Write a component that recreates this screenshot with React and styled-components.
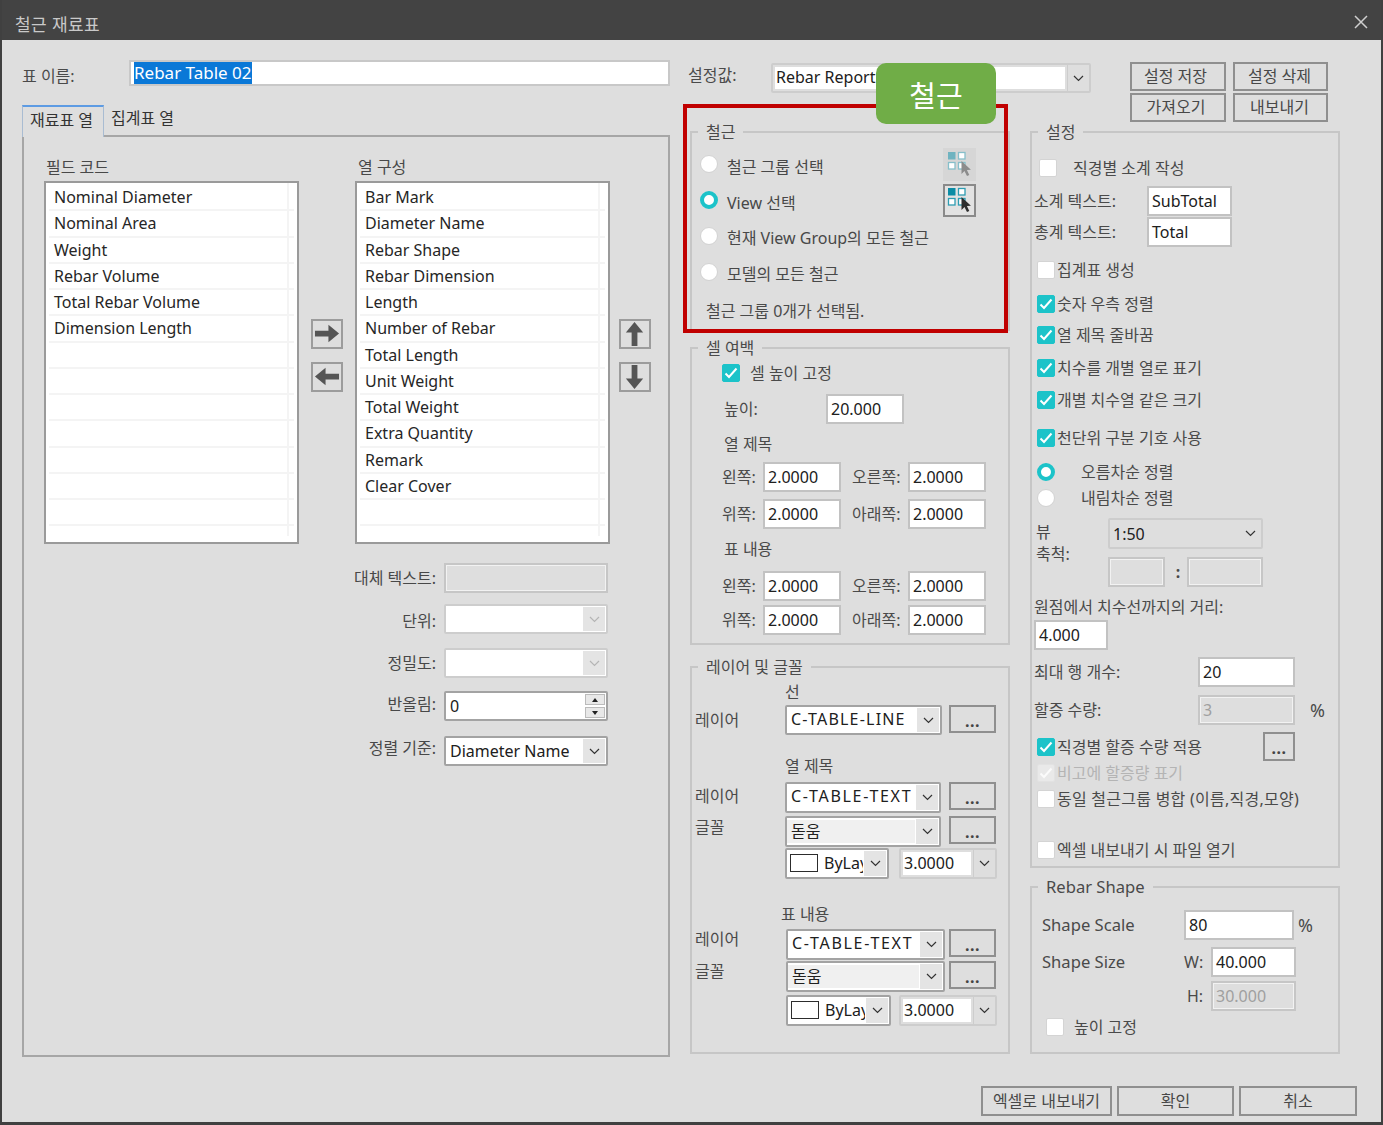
import React from "react";
import styled, { createGlobalStyle } from "styled-components";

const GlobalStyle = createGlobalStyle`
  * { box-sizing: border-box; }
  html, body { margin: 0; padding: 0; background: #dedede; }
  body {
    font-family: "Noto Sans", "Noto Sans CJK KR", sans-serif;
    font-size: 16px;
    color: #484848;
  }
`;

const Window = styled.div`
  position: relative;
  width: 1383px;
  height: 1125px;
  overflow: hidden;
  background: #dedede;
  border-left: 2px solid #404040;
  border-right: 2px solid #404040;
  border-bottom: 3px solid #404040;
`;

const TitleBar = styled.div`
  height: 40px;
  margin: 0 -2px;
  padding: 4px 15px 0 15px;
  display: flex;
  align-items: center;
  justify-content: space-between;
  background: #434343;
  color: #c9c9c9;
`;

const TitleText = styled.span`
  padding-top: 2px;
  font-size: 17px;
  letter-spacing: 0.4px;
`;

const Main = styled.div`
  display: flex;
  gap: 20px;
  padding: 20px 0 0 20px;
`;

const LeftColumn = styled.div`
  width: 648px;
`;

const RightArea = styled.div`
  margin-top: 3px;
`;

const HeaderRow = styled.div`
  height: 59px;
  margin-left: -2px;
  display: flex;
  align-items: flex-start;
`;

const HeaderButtons = styled.div`
  margin: -1px 0 0 39px;
`;

const Columns = styled.div`
  display: flex;
  gap: 20px;
`;

const Stack = styled.div`
  width: ${(p) => p.$w}px;
`;

const Row = styled.div`
  display: flex;
  align-items: ${(p) => p.$align || "center"};
  height: ${(p) => (p.$h ? `${p.$h}px` : "auto")};
  margin-top: ${(p) => p.$mt || 0}px;
  padding-left: ${(p) => p.$pl || 0}px;
  padding-right: ${(p) => p.$pr || 0}px;
  gap: ${(p) => p.$gap || 0}px;
  min-height: 20px;
`;

const Label = styled.div`
  flex: none;
  width: ${(p) => (p.$w ? `${p.$w}px` : "auto")};
  margin-left: ${(p) => p.$ml || 0}px;
  padding-top: ${(p) => p.$pt || 0}px;
  line-height: 20px;
  white-space: nowrap;
  font-size: ${(p) => p.$size || 16}px;
  letter-spacing: ${(p) => p.$ls || 0}px;
  color: ${(p) => (p.$muted ? "#b4b4b4" : "#4a4a4a")};
`;

const Box = styled.div`
  flex: none;
  width: ${(p) => p.$w}px;
  height: ${(p) => p.$h || 30}px;
  padding: 0 3px;
  display: flex;
  align-items: center;
  overflow: hidden;
  white-space: nowrap;
  background: ${(p) => (p.$off ? "#dedede" : "#fff")};
  border: 2px solid ${(p) => (p.$off ? "#c6c6c6" : "#c2c2c2")};
  box-shadow: ${(p) => (p.$off ? "inset 0 0 0 1px #f2f2f2" : "none")};
  color: ${(p) => (p.$off ? "#a0a0a0" : "#202020")};
`;

const Selected = styled.span`
  background: #0a78d7;
  color: #fff;
  font-size: 17px;
  line-height: 22px;
`;

const Combo = styled.div`
  flex: none;
  display: flex;
  align-items: stretch;
  width: ${(p) => p.$w}px;
  height: ${(p) => p.$h || 30}px;
  background: ${(p) => (p.$flat || p.$boxed ? "#dedede" : "#fff")};
  border: 2px solid ${(p) => (p.$strong ? "#a3a3a3" : "#cdcdcd")};
  border-radius: 2px;
  color: #202020;
`;

const ComboText = styled.div`
  flex: 1;
  min-width: 0;
  display: flex;
  align-items: center;
  gap: 6px;
  padding-left: ${(p) => p.$pl || 4}px;
  padding-bottom: ${(p) => p.$lift || 0}px;
  overflow: hidden;
  white-space: nowrap;
  letter-spacing: ${(p) => p.$ls || 0}px;
  background: ${(p) => (p.$tint ? "#f0f0f0" : p.$boxed ? "#fff" : "transparent")};
  margin: ${(p) => (p.$tint ? "2px 0" : p.$boxed ? "2px" : 0)};
`;

const ComboArrow = styled.div`
  flex: none;
  width: 22px;
  display: flex;
  align-items: center;
  justify-content: center;
  background: ${(p) => (p.$plain ? "transparent" : "#e4e4e4")};
  margin: ${(p) => (p.$plain ? 0 : "1px")};
  border-left: ${(p) => (p.$split ? "1px solid #cdcdcd" : 0)};
`;

const Swatch = styled.span`
  flex: none;
  width: 28px;
  height: 18px;
  background: #fff;
  border: 1.5px solid #2c2c2c;
`;

const SpinColumn = styled.div`
  flex: none;
  width: 20px;
  margin: 1px;
  display: flex;
  flex-direction: column;
  justify-content: center;
  gap: 2px;
`;

const SpinCell = styled.div`
  height: 12px;
  display: flex;
  align-items: center;
  justify-content: center;
  background: #e8e8e8;
  border: 1px solid #bbb;
`;

const Caret = styled.span`
  width: 0;
  height: 0;
  border-left: 3.5px solid transparent;
  border-right: 3.5px solid transparent;
  ${(p) => (p.$down ? "border-top: 4px solid #222;" : "border-bottom: 4px solid #222;")}
`;

const Button = styled.div`
  flex: none;
  width: ${(p) => p.$w}px;
  height: ${(p) => p.$h || 28}px;
  padding: 0 ${(p) => p.$pr || 0}px 3px 0;
  display: flex;
  align-items: center;
  justify-content: center;
  background: #dedede;
  border: 2px solid #8f8f8f;
  color: #484848;
  white-space: nowrap;
`;

const Dots = styled.span`
  font-weight: 700;
  color: #444;
  padding-top: 6px;
  letter-spacing: 0.5px;
`;

const NameInput = styled(Box)`
  height: 26px;
  border-color: #c8c8c8;
`;

const Tabs = styled.div`
  display: flex;
  margin-top: 19px;
  height: 30px;
`;

const Tab = styled.div`
  width: ${(p) => p.$w}px;
  height: ${(p) => (p.$active ? 32 : 30)}px;
  padding-left: 7px;
  line-height: 26px;
  position: relative;
  z-index: 1;
  color: #333;
  background: #dedede;
  ${(p) =>
    p.$active &&
    `border: 1.5px solid #a9bcd2; border-top: 2px solid #5d9be3; border-bottom: 0;`}
`;

const TabPanel = styled.div`
  height: 922px;
  padding: 20px 0 0 20px;
  border: 2px solid #a6a6a6;
`;

const ListRow = styled.div`
  display: grid;
  grid-template-columns: 255px 56px 255px 41px;
`;

const ListTitle = styled.div`
  line-height: 20px;
  height: 24px;
  padding-left: ${(p) => p.$pl}px;
`;

const List = styled.div`
  position: relative;
  height: 363px;
  padding: 2px 3px;
  overflow: hidden;
  background: #fff;
  border: 2px solid #9a9a9a;
  &::after {
    content: "";
    position: absolute;
    top: 0;
    bottom: 6px;
    right: 8px;
    width: 2px;
    background: #f4f4f4;
  }
`;

const ListItem = styled.div`
  height: 26.25px;
  line-height: 25px;
  padding-left: 5px;
  color: #262626;
  white-space: nowrap;
  border-bottom: 2px solid #f4f4f4;
`;

const MoveColumn = styled.div`
  display: flex;
  flex-direction: column;
  gap: 13px;
  padding: 162px 0 0 ${(p) => p.$pl}px;
`;

const MoveButton = styled(Button)`
  width: 32px;
  height: 30px;
  padding: 0;
  border-color: #9c9c9c;
`;

const FormRow = styled.div`
  display: flex;
  align-items: center;
  width: 564px;
  gap: 8px;
  margin-top: ${(p) => p.$mt}px;
`;

const FormLabel = styled.div`
  flex: 1;
  padding-top: ${(p) => p.$pt || 0}px;
  padding-bottom: ${(p) => p.$pb || 0}px;
  text-align: right;
  line-height: 20px;
  white-space: nowrap;
`;

const Group = styled.fieldset`
  margin: ${(p) => p.$mt || 0}px 0 0;
  padding: 0;
  min-width: 0;
  width: 100%;
  height: ${(p) => p.$h}px;
  border: 2px solid #c6c6c6;
`;

const GroupTitle = styled.legend`
  margin-left: 6px;
  padding: 0 8px;
  line-height: 20px;
  font-size: ${(p) => p.$size || 16}px;
  color: #4a4a4a;
`;

const Radio = styled.span`
  flex: none;
  width: 18px;
  height: 18px;
  border-radius: 50%;
  background: #fff;
  border: ${(p) => (p.$on ? "4.5px solid #1cc3c9" : "1px solid #d2d2d2")};
`;

const Check = styled.span`
  flex: none;
  width: 18px;
  height: 18px;
  display: flex;
  align-items: center;
  justify-content: center;
  border-radius: 2px;
  background: ${(p) => (p.$off ? "#e9e9e9" : p.$on ? "#1cc3c9" : "#fff")};
  border: 1px solid ${(p) => (p.$off ? "#e2e2e2" : p.$on ? "#1cc3c9" : "#d4d4d4")};
`;

const RadioText = styled.span`
  padding-top: ${(p) => p.$pt || 6}px;
  line-height: 20px;
  white-space: nowrap;
`;

const IconButton = styled.div`
  flex: none;
  margin-left: auto;
  width: 33px;
  height: 33px;
  display: flex;
  align-items: center;
  justify-content: center;
  background: ${(p) => (p.$off ? "#d6d6d6" : "#e2e2e2")};
  border: 2px solid ${(p) => (p.$off ? "#d6d6d6" : "#8a8a8a")};
`;

const ScaleLabels = styled.div`
  flex: none;
  width: 72px;
  padding-top: 3px;
  line-height: 22px;
`;

const Colon = styled.div`
  width: 22px;
  padding-left: 4px;
  text-align: center;
  font-weight: 700;
`;

const Pushed = styled.div`
  margin-left: ${(p) => (p.$auto ? "auto" : `${p.$ml}px`)};
`;

const Footer = styled.div`
  display: flex;
  justify-content: flex-end;
  gap: 5px;
  margin-top: 29px;
  padding-right: 24px;
`;

const RedFrame = styled.div`
  position: absolute;
  left: 681px;
  top: 104px;
  width: 325px;
  height: 229px;
  border: 4px solid #c00000;
  pointer-events: none;
`;

const Badge = styled.div`
  position: absolute;
  left: 874px;
  top: 63px;
  width: 120px;
  height: 61px;
  display: flex;
  align-items: center;
  justify-content: center;
  border-radius: 10px;
  background: #70ad47;
  color: #fff;
  font-size: 29px;
`;

const Chevron = ({ light }) => (
  <svg width="11" height="7" viewBox="0 0 11 7" fill="none">
    <path d="M1 1l4.5 4.5L10 1" stroke={light ? "#b5b5b5" : "#333"} strokeWidth="1.2" />
  </svg>
);

const Tick = ({ light }) => (
  <svg width="14" height="12" viewBox="0 0 14 12" fill="none">
    <path d="M1.5 6.5l3.5 3.5 7.5-8.5" stroke={light ? "#fbfbfb" : "#fff"} strokeWidth="2" />
  </svg>
);

const CloseIcon = () => (
  <svg width="14" height="14" viewBox="0 0 14 14" fill="none">
    <path d="M1 1l12 12M13 1L1 13" stroke="#cfcfcf" strokeWidth="1.5" />
  </svg>
);

const arrows = {
  right: "M1 8h14V2l11 9-11 9v-6H1z",
  left: "M26 8H12V2L1 11l11 9v-6h14z",
  up: "M8 26V12H2l9-11 9 11h-6v14z",
  down: "M8 1v14H2l9 11 9-11h-6V1z",
};

const MoveArrow = ({ dir }) => (
  <svg width="26" height="26" viewBox="0 0 27 27">
    <path d={arrows[dir]} fill="#555" transform={dir === "up" || dir === "down" ? "translate(2 0)" : "translate(0 2)"} />
  </svg>
);

const PickIcon = ({ off }) => {
  const fill = off ? "#6fb3c0" : "#0b8ca5";
  const line = off ? "#86bfca" : "#2e9db2";
  const cursor = off ? "#8c8c8c" : "#2e2e2e";
  return (
    <svg width="28" height="28" viewBox="0 0 28 28">
      <rect x="2" y="2" width="7.5" height="7.5" fill={fill} />
      <rect x="12.5" y="2.5" width="6.5" height="6.5" fill="#fff" stroke={line} strokeWidth="1.3" />
      <rect x="2.5" y="12.5" width="6.5" height="6.5" fill="#fff" stroke={line} strokeWidth="1.3" />
      <rect x="12.5" y="12.5" width="6.5" height="6.5" fill="#fff" stroke={line} strokeWidth="1.3" />
      <path d="M15.5 11v13l3-3 2.5 5 2.3-1-2.4-5 4-.3z" fill={cursor} />
    </svg>
  );
};

const Select = ({ w, h, text, strong, tint, flat, boxed, swatch, pl, light, lift, ls }) => (
  <Combo $w={w} $h={h} $strong={strong} $flat={flat} $boxed={boxed}>
    <ComboText $tint={tint} $boxed={boxed} $pl={pl} $lift={lift} $ls={ls}>
      {swatch && <Swatch />}
      {text}
    </ComboText>
    <ComboArrow $plain={flat || boxed} $split={boxed}>
      <Chevron light={light} />
    </ComboArrow>
  </Combo>
);

const Dotted = ({ w = 47, h = 28 }) => (
  <Button $w={w} $h={h}>
    <Dots>...</Dots>
  </Button>
);

const CheckRow = ({ mt, pl = 5, gap = 2, text, on, off, ls }) => (
  <Row $mt={mt} $pl={pl} $gap={gap}>
    <Check $on={on} $off={off}>
      {(on || off) && <Tick light={off} />}
    </Check>
    <Label $muted={off} $ls={ls}>{text}</Label>
  </Row>
);

const MarginRow = ({ mt, left, right }) => (
  <Row $mt={mt} $pl={30}>
    <Label $w={41}>{left[0]}</Label>
    <Box $w={78}>{left[1]}</Box>
    <Label $w={56} $ml={11}>{right[0]}</Label>
    <Box $w={78}>{right[1]}</Box>
  </Row>
);

const fieldCodes = [
  "Nominal Diameter",
  "Nominal Area",
  "Weight",
  "Rebar Volume",
  "Total Rebar Volume",
  "Dimension Length",
];

const tableColumns = [
  "Bar Mark",
  "Diameter Name",
  "Rebar Shape",
  "Rebar Dimension",
  "Length",
  "Number of Rebar",
  "Total Length",
  "Unit Weight",
  "Total Weight",
  "Extra Quantity",
  "Remark",
  "Clear Cover",
];

const ListBox = ({ items }) => (
  <List>
    {Array.from({ length: 14 }).map((_, i) => (
      <ListItem key={i}>{items[i] || ""}</ListItem>
    ))}
  </List>
);

export default function App() {
  return (
    <>
      <GlobalStyle />
      <Window>
        <TitleBar>
          <TitleText>철근 재료표</TitleText>
          <CloseIcon />
        </TitleBar>
        <Main>
          <LeftColumn>
            <Row>
              <Label $w={107} $pt={6}>표 이름:</Label>
              <NameInput $w={541}>
                <Selected>Rebar Table 02</Selected>
              </NameInput>
            </Row>
            <Tabs>
              <Tab $w={82} $active>
                재료표 열
              </Tab>
              <Tab $w={80}>집계표 열</Tab>
            </Tabs>
            <TabPanel>
              <ListRow>
                <div>
                  <ListTitle $pl={2}>필드 코드</ListTitle>
                  <ListBox items={fieldCodes} />
                </div>
                <MoveColumn $pl={12}>
                  <MoveButton>
                    <MoveArrow dir="right" />
                  </MoveButton>
                  <MoveButton>
                    <MoveArrow dir="left" />
                  </MoveButton>
                </MoveColumn>
                <div>
                  <ListTitle $pl={3}>열 구성</ListTitle>
                  <ListBox items={tableColumns} />
                </div>
                <MoveColumn $pl={9}>
                  <MoveButton>
                    <MoveArrow dir="up" />
                  </MoveButton>
                  <MoveButton>
                    <MoveArrow dir="down" />
                  </MoveButton>
                </MoveColumn>
              </ListRow>
              <FormRow $mt={19}>
                <FormLabel>대체 텍스트:</FormLabel>
                <Box $w={164} $off />
              </FormRow>
              <FormRow $mt={11}>
                <FormLabel $pt={4}>단위:</FormLabel>
                <Select w={164} text="" light />
              </FormRow>
              <FormRow $mt={14}>
                <FormLabel>정밀도:</FormLabel>
                <Select w={164} text="" light />
              </FormRow>
              <FormRow $mt={13}>
                <FormLabel $pb={4}>반올림:</FormLabel>
                <Combo $w={164} $strong>
                  <ComboText>0</ComboText>
                  <SpinColumn>
                    <SpinCell>
                      <Caret />
                    </SpinCell>
                    <SpinCell>
                      <Caret $down />
                    </SpinCell>
                  </SpinColumn>
                </Combo>
              </FormRow>
              <FormRow $mt={15}>
                <FormLabel $pb={6}>정렬 기준:</FormLabel>
                <Select w={164} text="Diameter Name" strong />
              </FormRow>
            </TabPanel>
          </LeftColumn>

          <RightArea>
            <HeaderRow>
              <Label $w={83} $pt={2}>설정값:</Label>
              <Select w={320} h={30} text="Rebar Report" pl={1} boxed lift={2} />
              <HeaderButtons>
                <Row $gap={7}>
                  <Button $w={96} $h={29} $pr={5}>설정 저장</Button>
                  <Button $w={95} $h={29} $pr={2}>설정 삭제</Button>
                </Row>
                <Row $gap={7} $mt={2}>
                  <Button $w={96} $h={29} $pr={4}>가져오기</Button>
                  <Button $w={95} $h={29} $pr={2}>내보내기</Button>
                </Row>
              </HeaderButtons>
            </HeaderRow>
            <Columns>
              <Stack $w={320}>
                <Group $h={209}>
                  <GroupTitle>철근</GroupTitle>
                  <Row $mt={4} $pl={8} $pr={32} $gap={9} $h={36}>
                    <Radio />
                    <RadioText>철근 그룹 선택</RadioText>
                    <IconButton $off>
                      <PickIcon off />
                    </IconButton>
                  </Row>
                  <Row $pl={8} $pr={32} $gap={9} $h={36}>
                    <Radio $on />
                    <RadioText>View 선택</RadioText>
                    <IconButton>
                      <PickIcon />
                    </IconButton>
                  </Row>
                  <Row $pl={8} $gap={9} $h={36}>
                    <Radio />
                    <RadioText $pt={4}>현재 View Group의 모든 철근</RadioText>
                  </Row>
                  <Row $pl={8} $gap={9} $h={36}>
                    <Radio />
                    <RadioText $pt={4}>모델의 모든 철근</RadioText>
                  </Row>
                  <Row $mt={11} $pl={14}>
                    <Label>철근 그룹 0개가 선택됨.</Label>
                  </Row>
                </Group>

                <Group $h={307} $mt={7}>
                  <GroupTitle>셀 여백</GroupTitle>
                  <CheckRow mt={5} pl={30} gap={10} text="셀 높이 고정" on />
                  <Row $mt={11} $pl={32}>
                    <Label $w={102}>높이:</Label>
                    <Box $w={78}>20.000</Box>
                  </Row>
                  <Row $mt={10} $pl={32}>
                    <Label>열 제목</Label>
                  </Row>
                  <MarginRow mt={8} left={["왼쪽:", "2.0000"]} right={["오른쪽:", "2.0000"]} />
                  <MarginRow mt={7} left={["위쪽:", "2.0000"]} right={["아래쪽:", "2.0000"]} />
                  <Row $mt={10} $pl={32}>
                    <Label>표 내용</Label>
                  </Row>
                  <MarginRow mt={12} left={["왼쪽:", "2.0000"]} right={["오른쪽:", "2.0000"]} />
                  <MarginRow mt={4} left={["위쪽:", "2.0000"]} right={["아래쪽:", "2.0000"]} />
                </Group>

                <Group $h={397} $mt={12}>
                  <GroupTitle>레이어 및 글꼴</GroupTitle>
                  <Row $mt={5} $pl={93}>
                    <Label>선</Label>
                  </Row>
                  <Row $mt={3} $pl={3} $align="flex-start">
                    <Label $w={90} $pt={5}>레이어</Label>
                    <Select w={157} text="C-TABLE-LINE" strong lift={3} ls={1.2} />
                    <Pushed $ml={7}>
                      <Dotted />
                    </Pushed>
                  </Row>

                  <Row $mt={21} $pl={93}>
                    <Label>열 제목</Label>
                  </Row>
                  <Row $mt={6} $pl={3} $align="flex-start">
                    <Label $w={90} $pt={4}>레이어</Label>
                    <Select w={156} h={31} text="C-TABLE-TEXT" strong lift={3} ls={1.7} />
                    <Pushed $ml={8}>
                      <Dotted />
                    </Pushed>
                  </Row>
                  <Row $mt={3} $pl={3} $align="flex-start">
                    <Label $w={90} $pt={1}>글꼴</Label>
                    <Select w={156} h={31} text="돋움" tint strong lift={3} />
                    <Pushed $ml={8}>
                      <Dotted />
                    </Pushed>
                  </Row>
                  <Row $mt={1} $pl={93} $gap={10}>
                    <Select w={104} h={31} text="ByLayer" swatch strong lift={2} pl={3} />
                    <Select w={98} h={31} text="3.0000" boxed lift={2} pl={1} />
                  </Row>

                  <Row $mt={25} $pl={89}>
                    <Label>표 내용</Label>
                  </Row>
                  <Row $mt={5} $pl={3} $align="flex-start">
                    <Label $w={91}>레이어</Label>
                    <Select w={159} h={31} text="C-TABLE-TEXT" strong lift={3} ls={1.7} />
                    <Pushed $ml={4}>
                      <Dotted />
                    </Pushed>
                  </Row>
                  <Row $mt={1} $pl={3} $align="flex-start">
                    <Label $w={91}>글꼴</Label>
                    <Select w={159} h={31} text="돋움" tint strong lift={3} />
                    <Pushed $ml={4}>
                      <Dotted />
                    </Pushed>
                  </Row>
                  <Row $mt={3} $pl={94} $gap={8}>
                    <Select w={105} h={31} text="ByLayer" swatch strong lift={2} pl={3} />
                    <Select w={98} h={31} text="3.0000" boxed lift={2} pl={1} />
                  </Row>
                </Group>
              </Stack>

              <Stack $w={310}>
                <Group $h={746}>
                  <GroupTitle>설정</GroupTitle>
                  <CheckRow mt={16} pl={7} gap={16} text="직경별 소계 작성" />
                  <Row $mt={8} $pl={2}>
                    <Label $w={113}>소계 텍스트:</Label>
                    <Box $w={85}>SubTotal</Box>
                  </Row>
                  <Row $mt={1} $pl={2}>
                    <Label $w={113}>총계 텍스트:</Label>
                    <Box $w={85}>Total</Box>
                  </Row>
                  <CheckRow mt={13} text="집계표 생성" />
                  <CheckRow mt={14} text="숫자 우측 정렬" on />
                  <CheckRow mt={11} text="열 제목 줄바꿈" on />
                  <CheckRow mt={13} text="치수를 개별 열로 표기" on />
                  <CheckRow mt={12} text="개별 치수열 같은 크기" on />
                  <CheckRow mt={18} text="천단위 구분 기호 사용" on />
                  <Row $mt={14} $pl={5} $gap={26}>
                    <Radio $on />
                    <Label>오름차순 정렬</Label>
                  </Row>
                  <Row $mt={6} $pl={5} $gap={26}>
                    <Radio />
                    <Label>내림차순 정렬</Label>
                  </Row>
                  <Row $mt={10} $pl={4} $align="flex-start">
                    <ScaleLabels>
                      뷰
                      <br />
                      축척:
                    </ScaleLabels>
                    <div>
                      <Select w={155} h={31} text="1:50" flat pl={3} />
                      <Row $mt={8}>
                        <Box $w={57} $off />
                        <Colon>:</Colon>
                        <Box $w={76} $off />
                      </Row>
                    </div>
                  </Row>
                  <Row $mt={10} $pl={2}>
                    <Label>원점에서 치수선까지의 거리:</Label>
                  </Row>
                  <Row $mt={3} $pl={2}>
                    <Box $w={74}>4.000</Box>
                  </Row>
                  <Row $mt={7} $pl={2}>
                    <Label $w={164}>최대 행 개수:</Label>
                    <Box $w={97}>20</Box>
                  </Row>
                  <Row $mt={8} $pl={2}>
                    <Label $w={164}>할증 수량:</Label>
                    <Box $w={97} $off>3</Box>
                    <Label $ml={15} $size={18}>%</Label>
                  </Row>
                  <Row $mt={7} $pl={5} $pr={43} $gap={2}>
                    <Check $on>
                      <Tick />
                    </Check>
                    <Label>직경별 할증 수량 적용</Label>
                    <Pushed $auto>
                      <Dotted w={32} h={29} />
                    </Pushed>
                  </Row>
                  <CheckRow mt={2} text="비고에 할증량 표기" off />
                  <CheckRow mt={6} ls={0.25} text="동일 철근그룹 병합 (이름,직경,모양)" />
                  <CheckRow mt={31} text="엑셀 내보내기 시 파일 열기" />
                </Group>

                <Group $h={177} $mt={9}>
                  <GroupTitle $size={16.6}>Rebar Shape</GroupTitle>
                  <Row $mt={13} $pl={10}>
                    <Label $w={142} $size={16.6}>Shape Scale</Label>
                    <Box $w={110}>80</Box>
                    <Label $ml={4} $size={18}>%</Label>
                  </Row>
                  <Row $mt={7} $pl={10}>
                    <Label $w={142} $size={16.6}>Shape Size</Label>
                    <Label $w={27}>W:</Label>
                    <Box $w={85}>40.000</Box>
                  </Row>
                  <Row $mt={4} $pl={10}>
                    <Label $w={145} />
                    <Label $w={24}>H:</Label>
                    <Box $w={85} $off>30.000</Box>
                  </Row>
                  <CheckRow mt={6} pl={14} gap={10} text="높이 고정" />
                </Group>
              </Stack>
            </Columns>
          </RightArea>
        </Main>
        <Footer>
          <Button $w={131} $h={30}>엑셀로 내보내기</Button>
          <Button $w={117} $h={30}>확인</Button>
          <Button $w={118} $h={30}>취소</Button>
        </Footer>
        <RedFrame />
        <Badge>철근</Badge>
      </Window>
    </>
  );
}
